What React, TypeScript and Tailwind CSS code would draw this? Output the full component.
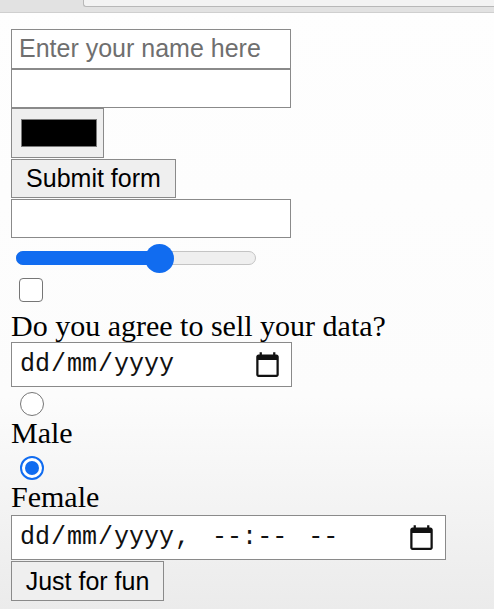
import React from 'react';

const sans = "font-['Liberation_Sans',Arial,sans-serif]";
const serif = "font-['Liberation_Serif','Times_New_Roman',serif]";
const mono = "font-['Liberation_Mono','Courier_New',monospace]";

function CalendarIcon() {
  return (
    <svg width="27" height="27" viewBox="0 0 24 24" className="shrink-0">
      <path
        fill="#111"
        d="M20 3h-1V1h-2v2H7V1H5v2H4c-1.1 0-2 .9-2 2v16c0 1.1.9 2 2 2h16c1.1 0 2-.9 2-2V5c0-1.1-.9-2-2-2zm0 18H4V8h16v13z"
      />
    </svg>
  );
}

function DateSegments() {
  return (
    <>
      <span className="px-px">dd</span>
      <span>/</span>
      <span className="px-px">mm</span>
      <span>/</span>
      <span className="px-px">yyyy</span>
    </>
  );
}

export default function App() {
  const field = 'block w-[280px] border border-[#8a8a8a] bg-white';

  return (
    <div
      className={`w-[494px] h-[609px] overflow-hidden flex flex-col bg-[linear-gradient(to_bottom,#fefefe_0%,#fcfcfc_65%,#ebebeb_100%)] text-black ${sans}`}
    >
      {/* browser chrome edge */}
      <div className="h-[13px] shrink-0 bg-[#e2e2e2] border-b border-[#cfcfcf]">
        <div className="ml-[83px] h-[7px] bg-[#f3f3f3] border-l border-b border-[#b8b8b8] rounded-bl-[3px]" />
      </div>

      <div className="flex flex-col items-start pl-[11px]">
        <input
          type="text"
          placeholder="Enter your name here"
          className={`${field} mt-[16px] h-[39.5px] pl-[7px] text-[25px] outline-none placeholder:text-[#6f6f6f]`}
        />
        <input type="text" className={`${field} h-[39.5px] outline-none`} />

        {/* color picker */}
        <div className="w-[93px] h-[50px] bg-[#efefef] border border-[#8a8a8a] flex items-center pl-[9px]">
          <div className="w-[76px] h-[28px] bg-black border border-[#7a7a7a]" />
        </div>

        <button className="mt-px h-[39px] w-[165px] bg-[#efefef] border border-[#8a8a8a] text-[25px] leading-none">
          Submit form
        </button>

        <input type="text" className={`${field} mt-px h-[39px] outline-none`} />

        {/* range */}
        <div className="h-[38px] pl-[5px] pt-[13px]">
          <div className="relative w-[240px] h-[14px] rounded-full bg-[#efefef] border border-[#c4c4c4] flex">
            <div className="w-[143px] -m-px h-[14px] rounded-l-full bg-[#116cf0]" />
            <div className="absolute left-[128px] top-[-8px] w-[29px] h-[29px] rounded-full bg-[#116cf0]" />
          </div>
        </div>

        {/* checkbox */}
        <div className="mt-[2px] ml-[8px] w-[24px] h-[24px] rounded-[4px] border border-[#767676] bg-white" />

        <label className={`mt-[7px] text-[30px] leading-[33px] ${serif}`}>Do you agree to sell your data?</label>

        {/* date */}
        <div className="w-[281px] h-[45px] border border-[#8a8a8a] bg-white flex items-center pl-[7px] pr-[10px]">
          <div className={`flex text-[25px] text-[#111] ${mono}`}>
            <DateSegments />
          </div>
          <div className="ml-auto">
            <CalendarIcon />
          </div>
        </div>

        {/* radios */}
        <div className="mt-[5px] ml-[9px] w-[24px] h-[24px] rounded-full border border-[#767676] bg-white" />
        <span className={`text-[30px] leading-[33px] ${serif}`}>Male</span>
        <div className="mt-[7px] ml-[9px] w-[24px] h-[24px] rounded-full border-2 border-[#116cf0] bg-white flex items-center justify-center">
          <div className="w-[14px] h-[14px] rounded-full bg-[#116cf0]" />
        </div>
        <span className={`text-[30px] leading-[33px] ${serif}`}>Female</span>

        {/* datetime-local */}
        <div className="mt-[2px] w-[435px] h-[45px] border border-[#8a8a8a] bg-white flex items-center pl-[7px] pr-[10px]">
          <div className={`flex text-[25px] text-[#111] whitespace-pre ${mono}`}>
            <DateSegments />
            <span>, </span>
            <span className="ml-[7px]">--</span>
            <span>:</span>
            <span>--</span>
            <span className="ml-[21px]">--</span>
          </div>
          <div className="ml-auto">
            <CalendarIcon />
          </div>
        </div>

        <button className="mt-px h-[40px] w-[153px] bg-[#efefef] border border-[#8a8a8a] text-[25px] leading-none">
          Just for fun
        </button>
      </div>
    </div>
  );
}
